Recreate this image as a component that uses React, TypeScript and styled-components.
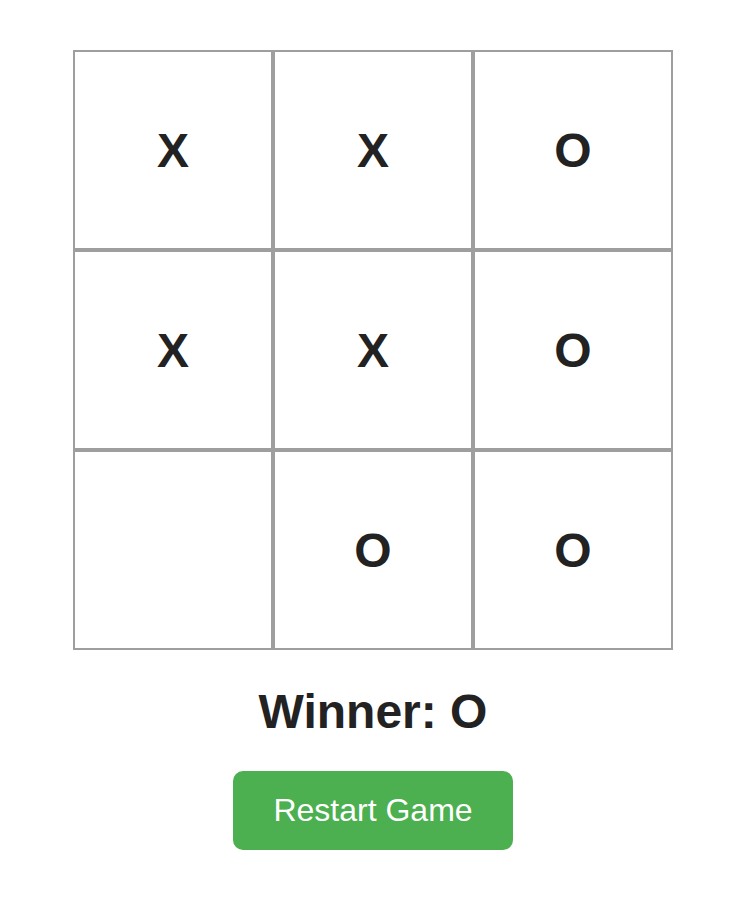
import React, { useState } from "react";
import styled, { createGlobalStyle } from "styled-components";

const GlobalStyle = createGlobalStyle`
  html, body {
    margin: 0;
    padding: 0;
    background: #ffffff;
    font-family: "Liberation Sans", Arial, Helvetica, sans-serif;
  }
`;

const Page = styled.div`
  box-sizing: border-box;
  width: 100%;
  padding: 50px 0 0 10px;
  display: flex;
  flex-direction: column;
  align-items: center;
`;

const Board = styled.div`
  display: grid;
  grid-template-columns: repeat(3, 200px);
  grid-template-rows: repeat(3, 200px);
`;

const Cell = styled.button`
  box-sizing: border-box;
  width: 200px;
  height: 200px;
  margin: 0;
  padding: 0;
  border: 2px solid #9e9e9e;
  background: #ffffff;
  color: #222222;
  font-family: "Liberation Sans", Arial, Helvetica, sans-serif;
  font-weight: 700;
  font-size: 48px;
  display: flex;
  align-items: center;
  justify-content: center;
  cursor: pointer;
`;

const Status = styled.h2`
  margin: 34px 0 0;
  font-size: 48px;
  line-height: 55px;
  font-weight: 700;
  color: #222222;
`;

const RestartButton = styled.button`
  margin-top: 32px;
  height: 79px;
  padding: 0 40px;
  border: none;
  border-radius: 10px;
  background: #4caf50;
  color: #ffffff;
  font-family: "Liberation Sans", Arial, Helvetica, sans-serif;
  font-size: 32px;
  cursor: pointer;
`;

const initial = ["X", "X", "O", "X", "X", "O", "", "O", "O"];

export default function App() {
  const [cells] = useState<string[]>(initial);
  return (
    <>
      <GlobalStyle />
      <Page>
        <Board>
          {cells.map((c, i) => (
            <Cell key={i}>{c}</Cell>
          ))}
        </Board>
        <Status>Winner: O</Status>
        <RestartButton>Restart Game</RestartButton>
      </Page>
    </>
  );
}
